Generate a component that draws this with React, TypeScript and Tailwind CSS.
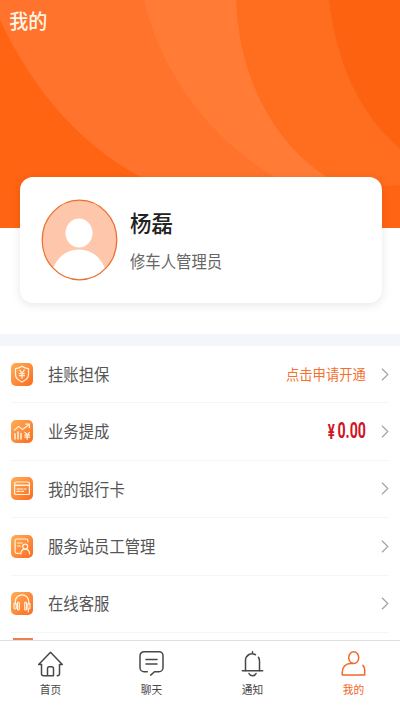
import type { ReactNode } from "react";

interface MenuRow {
  label: string;
  icon: ReactNode;
  extra?: ReactNode;
}

interface Tab {
  label: string;
  icon: ReactNode;
  active?: boolean;
}

const rows: MenuRow[] = [
  {
    label: "挂账担保",
    icon: (
      <>
        <path d="M11 3.3c2 1.5 4 2.2 6.5 2.3v6.2c0 3.2-2.5 5.3-6.5 7.2-4-1.9-6.5-4-6.5-7.2V5.6c2.5-.1 4.5-.8 6.5-2.3z" />
        <path d="M8.700 7.200l2.300 3 2.300-3M11 10.200v5M8.600 10.600h4.800M8.600 12.700h4.800" />
      </>
    ),
    extra: (
      <span className="origin-right scale-x-[.93] text-[14.3px] text-[#f5702c]">
        点击申请开通
      </span>
    ),
  },
  {
    label: "业务提成",
    icon: (
      <>
        <path d="M3.500 10l4.300-3.600 3.700 3.200 6.700-5M14.700 4.200h3.700v3.500" />
        <path d="M4 14v5M7 12v7M10 13.500v5.500" strokeWidth="1.5" />
        <path d="M14 12.300l2.200 2.700 2.200-2.700M16.200 15v4.200M13.800 15.200h4.800M13.800 17.200h4.800" />
      </>
    ),
    extra: (
      <span className="flex origin-right scale-x-[.66] items-center font-['Roboto'] text-[21.5px] font-bold text-[#d01424]">
        <span className="mr-[4px] text-[20px]">¥</span>0.00
      </span>
    ),
  },
  {
    label: "我的银行卡",
    icon: (
      <>
        <rect x="3.6" y="5" width="14.8" height="12.5" rx="1.3" />
        <path d="M3.600 8.300h14.800" strokeWidth="1.5" />
        <path d="M6 12h5.500M13 12h2M6 14.300h3M10.500 14.300h2" />
      </>
    ),
  },
  {
    label: "服务站员工管理",
    icon: (
      <>
        <path d="M8.500 18.300H5.600a1.500 1.500 0 0 1-1.500-1.500V5.500A1.500 1.500 0 0 1 5.600 4h9.800a1.500 1.500 0 0 1 1.500 1.500v1.300" />
        <path d="M6.700 8h4.500M6.700 11h3" />
        <circle cx="14.2" cy="11.6" r="2.5" />
        <path d="M9.800 19c.2-3 1.900-4.800 4.400-4.800s4.200 1.800 4.400 4.800" />
      </>
    ),
  },
  {
    label: "在线客服",
    icon: (
      <>
        <path d="M4.300 12V9.500a6.700 6.700 0 0 1 13.400 0V12" />
        <rect x="3" y="11" width="2.2" height="6" rx="1.1" />
        <rect x="6.5" y="10" width="1.8" height="8" rx=".9" />
        <rect x="13.7" y="10" width="1.8" height="8" rx=".9" />
        <rect x="16.8" y="11" width="2.2" height="6" rx="1.1" />
        <path d="M17.300 17v3" />
      </>
    ),
  },
];

const tabs: Tab[] = [
  {
    label: "首页",
    icon: (
      <>
        <path d="M4.500 14.500H1.700L13.500 2.200l11.800 12.300h-2.800v9.300c0 1.200-.7 2-2.300 2" />
        <path d="M4.500 14.500v9.300c0 1.200.8 2 2 2h10v-7.300c0-1.200-.6-1.800-1.700-1.800h-2.600c-1.100 0-1.700.6-1.700 1.800v7.300" />
      </>
    ),
  },
  {
    label: "聊天",
    icon: (
      <>
        <path d="M9.300 21.700H6a4 4 0 0 1-4-4V5.700a4 4 0 0 1 4-4h15a4 4 0 0 1 4 4v12a4 4 0 0 1-4 4h-4.500l-3.800 3.400" />
        <path d="M8 9.500h11M8 14h11" />
      </>
    ),
  },
  {
    label: "通知",
    icon: (
      <>
        <path d="M13.500 1.700v2M16.500 4.700C11.500 2.300 6.500 5.300 6.500 10.500v10.300M20.500 20.800V11c0-1.500-.3-2.700-1.100-3.700" />
        <path d="M3.300 20.800h20.400M10 23.500c1.200 3 5.800 3 7 0" />
      </>
    ),
  },
  {
    label: "我的",
    active: true,
    icon: (
      <>
        <ellipse cx="13.7" cy="7.7" rx="5" ry="5.9" />
        <path d="M13 13.600H10.500c-5 0-8.200 3.500-8.200 8.500v3h22.400v-5.500c0-1.500-.6-3-1.800-4.200" />
      </>
    ),
  },
];

function HeaderBackdrop() {
  return (
    <svg
      className="absolute inset-0 h-full w-full"
      viewBox="0 0 400 228"
      preserveAspectRatio="none"
    >
      <path d="M0 20C34 92 82 146 141 177L150 182H400V0H0Z" fill="#ff732c" />
      <path d="M144 0C160 70 208 138 275 177L284 182H400V0Z" fill="#ff7b36" />
      <path d="M236 0C239 75 272 142 327 177Q355 189 400 185V0Z" fill="#ff6d1f" />
      <path d="M329 0C336 60 358 113 400 149V0Z" fill="#fc6210" />
    </svg>
  );
}

function Avatar() {
  return (
    <svg width="77" height="82" viewBox="0 0 77 82" className="shrink-0">
      <defs>
        <clipPath id="avatar">
          <ellipse cx="38.5" cy="41" rx="37" ry="39.5" />
        </clipPath>
      </defs>
      <g clipPath="url(#avatar)">
        <rect width="77" height="82" fill="#fec6aa" />
        <ellipse cx="38" cy="34" rx="13.5" ry="14.5" fill="#fff" />
        <path d="M11 72C16 58 25 50.500 38 50.500S60 58 65 72V82H11Z" fill="#fff" />
      </g>
      <ellipse
        cx="38.5"
        cy="41"
        rx="37.3"
        ry="39.8"
        fill="none"
        stroke="#e9702f"
        strokeWidth="1.3"
      />
    </svg>
  );
}

function RowIcon({ children }: { children?: ReactNode }) {
  return (
    <div className="h-[23px] w-[22px] shrink-0 rounded-[5px] bg-linear-to-br from-[#ffad54] to-[#fa6a20]">
      <svg
        width="22"
        height="23"
        viewBox="0 0 22 23"
        fill="none"
        stroke="#fff3df"
        strokeWidth="1.2"
        strokeLinecap="round"
        strokeLinejoin="round"
      >
        {children}
      </svg>
    </div>
  );
}

function Chevron() {
  return (
    <svg
      width="8"
      height="13"
      viewBox="0 0 8 13"
      fill="none"
      stroke="#a3a3a3"
      strokeWidth="1.2"
      className="ml-[15px] shrink-0"
    >
      <path d="M1 .8l5.800 5.700L1 12.200" />
    </svg>
  );
}

export default function App() {
  return (
    <div className="flex h-[710px] w-[400px] flex-col overflow-hidden bg-white font-['Noto_Sans_CJK_SC',sans-serif]">
      <header className="relative h-[228px] shrink-0 bg-[#ff6413]">
        <HeaderBackdrop />
        <h1 className="relative origin-left scale-x-[.93] pt-[5px] pl-[10px] text-[20.5px] leading-[30px] font-medium text-[#fff6ea]">
          我的
        </h1>
      </header>

      <section className="relative mr-[18px] ml-[20px] -mt-[51px] flex h-[126px] shrink-0 items-center rounded-[13px] bg-white pl-[21px] shadow-[0_2px_10px_rgba(0,0,0,0.1)]">
        <Avatar />
        <div className="ml-[12px]">
          <div className="origin-left scale-x-[.93] text-[23px] leading-[32px] font-medium text-[#222]">
            杨磊
          </div>
          <div className="mt-[11px] mb-[2px] origin-left scale-x-[.93] text-[16.5px] leading-[24px] text-[#666]">
            修车人管理员
          </div>
        </div>
      </section>

      <div className="mt-[31px] h-[12px] shrink-0 bg-[#f3f6fa]" />

      <main className="min-h-0 flex-1 overflow-hidden">
        {rows.map((row) => (
          <div
            key={row.label}
            className="mr-[11px] ml-[11px] flex h-[57.4px] items-center border-b border-[#f3f6f7]"
          >
            <RowIcon>{row.icon}</RowIcon>
            <div className="ml-[15px] flex flex-1 items-center justify-between">
              <span className="origin-left scale-x-[.93] text-[16.5px] text-[#555]">
                {row.label}
              </span>
              <span className="flex items-center">
                {row.extra}
                <Chevron />
              </span>
            </div>
          </div>
        ))}
        <div className="pt-[5px] pl-[13px]">
          <div className="h-[23px] w-[20px] bg-[#e8824c]" />
        </div>
      </main>

      <nav className="flex h-[70px] shrink-0 border-t border-[#dedede] bg-white">
        {tabs.map((tab) => (
          <div
            key={tab.label}
            className={`flex w-[101px] shrink-0 flex-col items-center pt-[9px] ${
              tab.active ? "text-[#f2672a]" : "text-[#484848]"
            }`}
          >
            <svg
              width="27"
              height="28"
              viewBox="0 0 27 28"
              fill="none"
              stroke="currentColor"
              strokeWidth="1.5"
              strokeLinecap="round"
              strokeLinejoin="round"
            >
              {tab.icon}
            </svg>
            <span className="mt-[3px] scale-x-[.93] text-[11.5px] leading-[17px]">
              {tab.label}
            </span>
          </div>
        ))}
      </nav>
    </div>
  );
}
